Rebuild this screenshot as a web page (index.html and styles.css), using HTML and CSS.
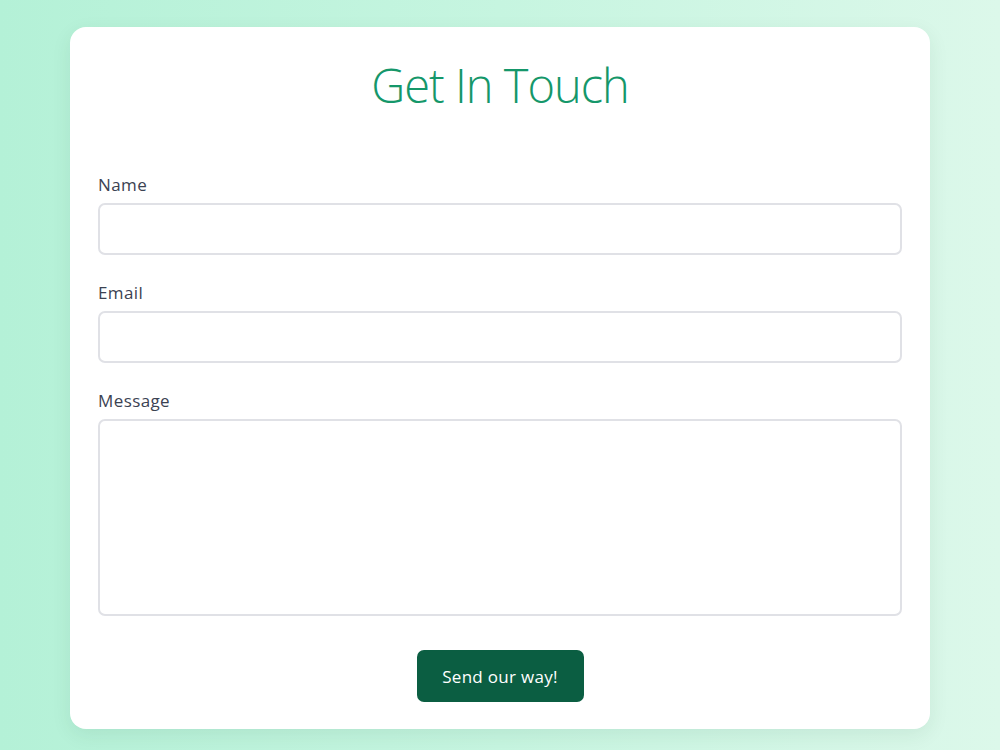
FILE: index.html
```html
<!doctype html>
<html lang="en">

<head>
  <meta charset="UTF-8" />
  <meta name="viewport" content="width=device-width, initial-scale=1.0" />
  <title>Get In Touch</title>
  <link rel="stylesheet" href="styles.css">
</head>

<body>
  <main class="page">
    <section class="contact-card">
      <h1 class="contact-title">Get In Touch</h1>

      <form class="contact-form">
        <div class="field">
          <label for="name">Name</label>
          <input type="text" id="name" name="name" />
        </div>

        <div class="field">
          <label for="email">Email</label>
          <input type="email" id="email" name="email" />
        </div>

        <div class="field">
          <label for="message">Message</label>
          <textarea id="message" name="message"></textarea>
        </div>

        <div class="actions">
          <button type="submit" class="send-btn">Send our way!</button>
        </div>
      </form>
    </section>
  </main>
</body>

</html>
```

FILE: styles.css
```css
html,
body {
  height: 100%;
}

body {
  margin: 0;
  padding: 0;
  font-family: "Open Sans", "Noto Sans", sans-serif;
  background: linear-gradient(90deg, #b4f1d7 0%, #c6f5e0 50%, #dcf8ea 100%);
  color: #374151;
}

.page {
  padding: 27px 0;
}

.contact-card {
  box-sizing: border-box;
  width: 860px;
  margin: 0 auto;
  padding: 28px 28px 27px;
  background-color: #ffffff;
  border-radius: 16px;
  box-shadow: 0 6px 20px rgba(0, 60, 40, 0.08);
}

.contact-title {
  margin: 0 0 59px;
  font-size: 47px;
  font-weight: 300;
  letter-spacing: -1px;
  line-height: 60px;
  color: #15976a;
  text-align: center;
}

.field {
  margin-bottom: 27px;
}

.field label {
  display: block;
  margin-bottom: 7px;
  font-size: 17px;
  letter-spacing: 0.4px;
  line-height: 22px;
  color: #3b4252;
}

.field input,
.field textarea {
  display: block;
  box-sizing: border-box;
  width: 100%;
  height: 52px;
  padding: 12px 14px;
  border: 2px solid #e0e1e6;
  border-radius: 7px;
  font-family: inherit;
  font-size: 16px;
  background: #ffffff;
  resize: none;
}

.field textarea {
  height: 197px;
}

.actions {
  display: flex;
  justify-content: center;
  padding-top: 7px;
}

.send-btn {
  width: 167px;
  height: 52px;
  border: none;
  border-radius: 7px;
  background-color: #0b5e42;
  color: #ffffff;
  font-family: inherit;
  font-size: 17px;
  letter-spacing: 0.3px;
  cursor: pointer;
}
```
